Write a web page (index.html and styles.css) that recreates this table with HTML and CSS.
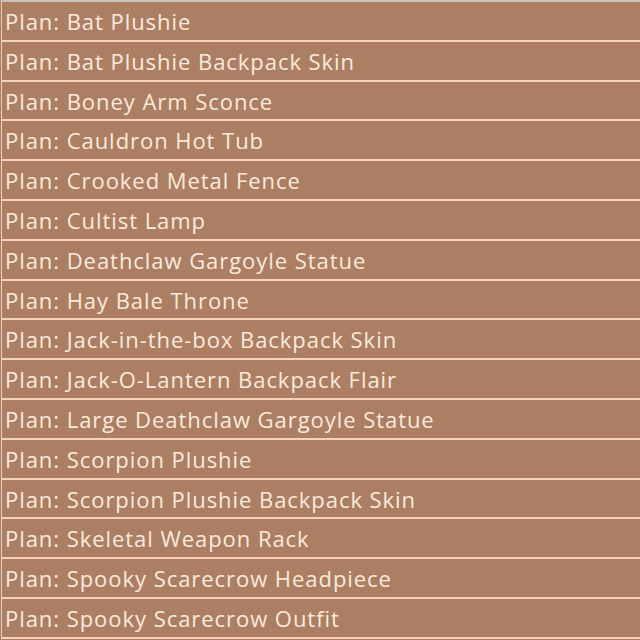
FILE: index.html
```html
<!DOCTYPE html>
<html>
<head>
<meta charset="utf-8">
<link rel="stylesheet" href="styles.css">
</head>
<body>
<ul class="list">
<li class="row">Plan: Bat Plushie</li>
<li class="row">Plan: Bat Plushie Backpack Skin</li>
<li class="row">Plan: Boney Arm Sconce</li>
<li class="row">Plan: Cauldron Hot Tub</li>
<li class="row">Plan: Crooked Metal Fence</li>
<li class="row">Plan: Cultist Lamp</li>
<li class="row">Plan: Deathclaw Gargoyle Statue</li>
<li class="row">Plan: Hay Bale Throne</li>
<li class="row">Plan: Jack-in-the-box Backpack Skin</li>
<li class="row">Plan: Jack-O-Lantern Backpack Flair</li>
<li class="row">Plan: Large Deathclaw Gargoyle Statue</li>
<li class="row">Plan: Scorpion Plushie</li>
<li class="row">Plan: Scorpion Plushie Backpack Skin</li>
<li class="row">Plan: Skeletal Weapon Rack</li>
<li class="row">Plan: Spooky Scarecrow Headpiece</li>
<li class="row">Plan: Spooky Scarecrow Outfit</li>
</ul>
</body>
</html>
```
FILE: styles.css
```css
html, body {
  margin: 0;
  padding: 0;
  background: #ac7f65;
  width: 640px;
  height: 640px;
  overflow: hidden;
}
.list {
  list-style: none;
  margin: 0;
  padding: 0;
  border-top: 2px solid #c9c2b8;
  border-left: 1px solid #ac7f65;
}
.row {
  height: 37.8px;
  line-height: 39px;
  border-bottom: 2px solid #f6d2ba;
  border-left: 1px solid #e8cdb8;
  padding-left: 3px;
  font-family: "Open Sans", sans-serif;
  font-size: 22px;
  letter-spacing: 0.95px;
  color: #faeadb;
  white-space: nowrap;
  overflow: hidden;
}
```
